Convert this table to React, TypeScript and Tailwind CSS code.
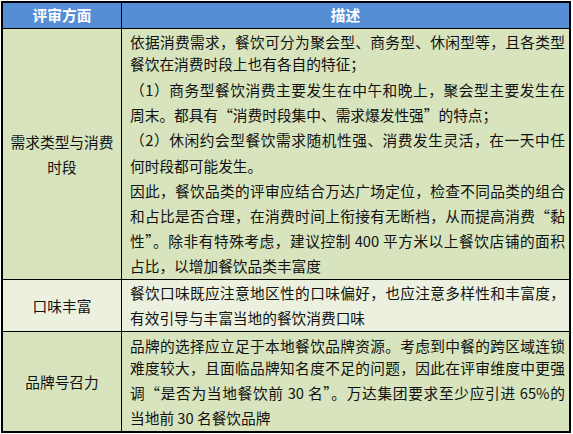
import React from "react"

type Line = { text: string; justify?: boolean; cls: string }

const font = { fontFamily: '"Noto Sans CJK SC", "Liberation Sans", sans-serif' }

const TextLine = ({ text, justify, cls }: Line) => (
  <div
    className={`whitespace-nowrap ${cls} ${
      justify ? "text-justify [text-align-last:justify]" : "text-left"
    }`}
  >
    {text}
  </div>
)

const demandLines: Line[] = [
  { text: "依据消费需求，餐饮可分为聚会型、商务型、休闲型等，且各类型", justify: true, cls: "h-[22px] leading-[22px]" },
  { text: "餐饮在消费时段上也有各自的特征；", cls: "h-[22px] leading-[22px]" },
  { text: "（1）商务型餐饮消费主要发生在中午和晚上，聚会型主要发生在", justify: true, cls: "mt-[2px] h-[25.2px] leading-[25.2px]" },
  { text: "周末。都具有“消费时段集中、需求爆发性强”的特点；", cls: "h-[25.2px] leading-[25.2px]" },
  { text: "（2）休闲约会型餐饮需求随机性强、消费发生灵活，在一天中任", justify: true, cls: "h-[25.2px] leading-[25.2px]" },
  { text: "何时段都可能发生。", cls: "h-[25.2px] leading-[25.2px]" },
  { text: "因此，餐饮品类的评审应结合万达广场定位，检查不同品类的组合", justify: true, cls: "h-[25.2px] leading-[25.2px]" },
  { text: "和占比是否合理，在消费时间上衔接有无断档，从而提高消费“黏", justify: true, cls: "h-[25.2px] leading-[25.2px]" },
  { text: "性”。除非有特殊考虑，建议控制 400 平方米以上餐饮店铺的面积", justify: true, cls: "h-[25.2px] leading-[25.2px]" },
  { text: "占比，以增加餐饮品类丰富度", cls: "h-[25.2px] leading-[25.2px]" },
]

const tasteLines: Line[] = [
  { text: "餐饮口味既应注意地区性的口味偏好，也应注意多样性和丰富度，", justify: true, cls: "h-[25px] leading-[25px]" },
  { text: "有效引导与丰富当地的餐饮消费口味", cls: "h-[25px] leading-[25px]" },
]

const brandLines: Line[] = [
  { text: "品牌的选择应立足于本地餐饮品牌资源。考虑到中餐的跨区域连锁", justify: true, cls: "h-[22px] leading-[22px]" },
  { text: "难度较大，且面临品牌知名度不足的问题，因此在评审维度中更强", justify: true, cls: "h-[22px] leading-[22px]" },
  { text: "调“是否为当地餐饮前 30 名”。万达集团要求至少应引进 65%的", justify: true, cls: "mt-[1px] h-[25px] leading-[25px]" },
  { text: "当地前 30 名餐饮品牌", cls: "h-[25px] leading-[25px]" },
]

interface IRowProps {
  label: string[]
  lines: Line[]
  bg: string
  height: string
  pad: string
  last?: boolean
}

const Row = ({ label, lines, bg, height, pad, last }: IRowProps) => (
  <div className={`flex ${bg} ${height} ${last ? "" : "border-b border-black"}`}>
    <div className="w-[119px] shrink-0 border-r border-black flex flex-col items-center justify-center">
      {label.map((l) => (
        <div key={l} className="h-[25px] leading-[25px] whitespace-nowrap">
          {l}
        </div>
      ))}
    </div>
    <div className={`flex-1 pl-[8px] pr-[4px] overflow-hidden ${pad}`}>
      {lines.map((l) => (
        <TextLine key={l.text} {...l} />
      ))}
    </div>
  </div>
)

export default function App() {
  return (
    <div className="w-[573px] h-[434px] bg-white pt-px pl-px" style={font}>
      <div className="w-[570px] border-2 border-black text-[14.7px] text-[#111]">
        <div className="flex h-[26px] bg-[#558ed5] border-b border-black text-white font-bold">
          <div className="w-[119px] shrink-0 border-r border-black flex items-center justify-center">
            评审方面
          </div>
          <div className="flex-1 flex items-center justify-center">描述</div>
        </div>
        <Row
          label={["需求类型与消费", "时段"]}
          lines={demandLines}
          bg="bg-[#d7e4bd]"
          height="h-[251px]"
          pad="pt-[2px]"
        />
        <Row
          label={["口味丰富"]}
          lines={tasteLines}
          bg="bg-[#ebf1de]"
          height="h-[52px]"
          pad="pt-0"
        />
        <Row
          label={["品牌号召力"]}
          lines={brandLines}
          bg="bg-[#d7e4bd]"
          height="h-[99px]"
          pad="pt-[3px]"
          last
        />
      </div>
    </div>
  )
}
